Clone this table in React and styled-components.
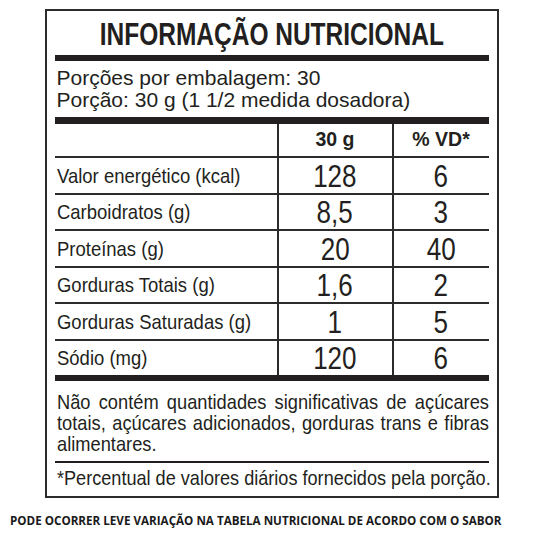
import React from "react"
import styled, { createGlobalStyle } from "styled-components"

const GlobalStyle = createGlobalStyle`
	html, body {
		margin: 0;
		padding: 0;
		background: #ffffff;
	}
	body {
		width: 544px;
		height: 544px;
		overflow: hidden;
		font-family: "Liberation Sans", Arial, sans-serif;
		color: #231f20;
	}
`

const Page = styled.div`
	display: flex;
	flex-direction: column;
	align-items: center;
	padding-top: 9px;
`

const Label = styled.div`
	box-sizing: border-box;
	width: 454px;
	margin-left: -1px;
	border: 2px solid #2b2b2b;
	padding: 0 8px;
	display: flex;
	flex-direction: column;
`

// the label uses a condensed grotesque, so we squeeze Liberation Sans sideways
const Squeeze = styled.span`
	display: inline-block;
	white-space: nowrap;
	transform: scaleX(${p => p.$k});
	transform-origin: ${p => p.$origin || "left"} center;
`

const Title = styled.h1`
	margin: 0;
	height: 44px;
	display: flex;
	align-items: center;
	justify-content: center;
	font-size: 31px;
	font-weight: bold;
	line-height: 1;
	padding-top: 2px;
	box-sizing: border-box;
`

const Rule = styled.div`
	height: ${p => p.$h}px;
	background: #231f20;
`

const Serving = styled.div`
	padding: 6px 0 6px 2px;
	font-size: 21px;
	line-height: 22px;
`

const Table = styled.div`
	display: grid;
	grid-template-columns: 222px 115px 1fr;
`

const Cell = styled.div`
	height: ${p => (p.$head ? 32 : 36.5)}px;
	box-sizing: border-box;
	border-top: ${p => (p.$head ? "none" : "2px solid #2b2b2b")};
	border-left: ${p => (p.$col > 0 ? "2px solid #2b2b2b" : "none")};
	display: flex;
	align-items: center;
	justify-content: ${p => (p.$col > 0 ? "center" : "flex-start")};
	padding-left: ${p => (p.$col > 0 ? 0 : 2)}px;
	font-size: ${p => (p.$head ? 19.5 : p.$col > 0 ? 31 : 21)}px;
	font-weight: ${p => (p.$head ? "bold" : "normal")};
	line-height: 1;
	padding-top: ${p => (p.$col > 0 && !p.$head ? 2 : 0)}px;
`

const Note = styled.div`
	padding: 10px 0 7px 2px;
	font-size: 21px;
	line-height: 21px;
`

const NoteLine = styled.span`
	display: block;
	width: ${p => p.$w / p.$k}px;
	white-space: nowrap;
	text-align: ${p => (p.$last ? "left" : "justify")};
	text-align-last: ${p => (p.$last ? "left" : "justify")};
	transform: scaleX(${p => p.$k});
	transform-origin: left center;
`

const Footnote = styled.div`
	padding: 4px 0 7px 2px;
	font-size: 21px;
	line-height: 22px;
`

const Disclaimer = styled.p`
	align-self: flex-start;
	margin: 15px 0 0 10px;
	font-family: "Open Sans", "Noto Sans", sans-serif;
	font-weight: bold;
	font-size: 11.65px;
	line-height: 16px;
	white-space: nowrap;
	color: #1a1a1a;
`

const rows = [
	["Valor energético (kcal)", "128", "6"],
	["Carboidratos (g)", "8,5", "3"],
	["Proteínas (g)", "20", "40"],
	["Gorduras Totais (g)", "1,6", "2"],
	["Gorduras Saturadas (g)", "1", "5"],
	["Sódio (mg)", "120", "6"],
]

const noteLines = [
	"Não contém quantidades significativas de açúcares",
	"totais, açúcares adicionados, gorduras trans e fibras",
	"alimentares.",
]

const App = () => {
	return (
		<Page>
			<GlobalStyle />
			<Label>
				<Title>
					<Squeeze $k={0.79} $origin="center">INFORMAÇÃO NUTRICIONAL</Squeeze>
				</Title>
				<Rule $h={6} />
				<Serving>
					Porções por embalagem: 30
					<br />
					Porção: 30 g (1 1/2 medida dosadora)
				</Serving>
				<Rule $h={7} />
				<Table>
					<Cell $head $col={0} />
					<Cell $head $col={1}>30 g</Cell>
					<Cell $head $col={2}>% VD*</Cell>
					{rows.map(r => (
						<React.Fragment key={r[0]}>
							<Cell $col={0}>
								<Squeeze $k={0.88}>{r[0]}</Squeeze>
							</Cell>
							<Cell $col={1}>
								<Squeeze $k={0.84} $origin="center">{r[1]}</Squeeze>
							</Cell>
							<Cell $col={2}>
								<Squeeze $k={0.84} $origin="center">{r[2]}</Squeeze>
							</Cell>
						</React.Fragment>
					))}
				</Table>
				<Rule $h={6} />
				<Note>
					{noteLines.map((line, i) => (
						<NoteLine key={i} $w={432} $k={0.87} $last={i === noteLines.length - 1}>
							{line}
						</NoteLine>
					))}
				</Note>
				<Rule $h={2} />
				<Footnote>
					<Squeeze $k={0.862}>*Percentual de valores diários fornecidos pela porção.</Squeeze>
				</Footnote>
			</Label>
			<Disclaimer>
				PODE OCORRER LEVE VARIAÇÃO NA TABELA NUTRICIONAL DE ACORDO COM O SABOR
			</Disclaimer>
		</Page>
	)
}

export default App
